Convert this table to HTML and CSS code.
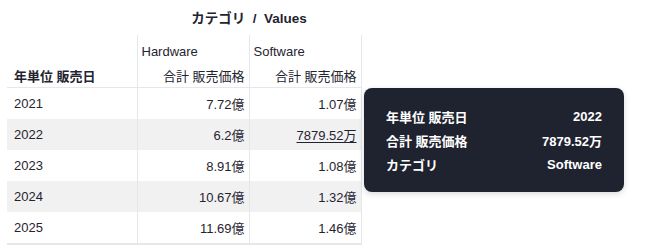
FILE: index.html
```html
<!DOCTYPE html>
<html lang="ja">
<head>
<meta charset="utf-8">
<link rel="stylesheet" href="styles.css">
</head>
<body>
<div class="pivot">
  <div class="title-row">
    <div class="title-spacer"></div>
    <div class="title">カテゴリ &nbsp;/&nbsp; Values</div>
  </div>
  <table class="grid">
    <colgroup>
      <col class="c1"><col class="c2"><col class="c3">
    </colgroup>
    <thead>
      <tr class="h1">
        <th class="corner"></th>
        <th class="cat">Hardware</th>
        <th class="cat last">Software</th>
      </tr>
      <tr class="h2">
        <th class="rowhead">年単位 販売日</th>
        <th class="measure">合計 販売価格</th>
        <th class="measure last">合計 販売価格</th>
      </tr>
    </thead>
    <tbody>
      <tr><td class="year">2021</td><td class="num">7.72億</td><td class="num last">1.07億</td></tr>
      <tr class="alt"><td class="year">2022</td><td class="num">6.2億</td><td class="num last"><span class="hover">7879.52万</span></td></tr>
      <tr><td class="year">2023</td><td class="num">8.91億</td><td class="num last">1.08億</td></tr>
      <tr class="alt"><td class="year">2024</td><td class="num">10.67億</td><td class="num last">1.32億</td></tr>
      <tr class="end"><td class="year">2025</td><td class="num">11.69億</td><td class="num last">1.46億</td></tr>
    </tbody>
  </table>
  <div class="tooltip">
    <div class="tip-row"><span>年単位 販売日</span><span>2022</span></div>
    <div class="tip-row"><span>合計 販売価格</span><span>7879.52万</span></div>
    <div class="tip-row"><span>カテゴリ</span><span>Software</span></div>
  </div>
</div>
</body>
</html>
```

FILE: styles.css
```css
html, body {
  margin: 0;
  padding: 0;
  background: #ffffff;
}
body {
  font-family: "Liberation Sans", "Noto Sans CJK JP", sans-serif;
  font-size: 13px;
  color: #1f2430;
}
.pivot {
  position: relative;
  padding-left: 7px;
  width: 640px;
  height: 252px;
}
.title-row {
  display: grid;
  grid-template-columns: 130px 224px;
  height: 35px;
  align-items: center;
}
.title {
  text-align: center;
  font-weight: bold;
  font-size: 13.5px;
  color: #1f2430;
  padding-bottom: 1px;
}
.grid {
  border-collapse: collapse;
  table-layout: fixed;
  width: 354px;
}
.c1 { width: 130px; }
.c2 { width: 112px; }
.c3 { width: 112px; }
.grid th, .grid td {
  padding: 0;
  white-space: nowrap;
}
.h1 th {
  height: 26px;
  padding-top: 3px;
  text-align: left;
  font-weight: normal;
  vertical-align: middle;
}
.h1 .cat {
  padding-left: 4px;
  border-left: 1px solid #e5e7eb;
}
.h1 .cat.last, .h2 .measure.last, .num.last {
  border-right: 1px solid #e5e7eb;
}
.h2 th {
  height: 23px;
  border-bottom: 1px solid #e5e7eb;
  vertical-align: middle;
}
.rowhead {
  text-align: left;
  font-weight: bold;
  padding-left: 7px !important;
}
.measure {
  text-align: right;
  font-weight: normal;
  padding-right: 4px !important;
  border-left: 1px solid #e5e7eb;
}
.grid td {
  height: 31px;
  vertical-align: middle;
}
.year {
  padding-left: 7px !important;
}
.num {
  text-align: right;
  padding-right: 4px !important;
  border-left: 1px solid #e5e7eb;
}
.alt td {
  background: #f1f1f2;
}
.end td {
  border-bottom: 2px solid #e5e7eb;
}
.hover {
  text-decoration: underline;
  text-underline-offset: 2px;
}
.tooltip {
  position: absolute;
  left: 364px;
  top: 88px;
  width: 260px;
  height: 104px;
  box-sizing: border-box;
  padding: 16px 22px;
  background: #1f2330;
  border-radius: 8px;
  box-shadow: 0 2px 6px rgba(0, 0, 0, 0.15);
  color: #ffffff;
  font-weight: 600;
}
.tip-row {
  display: flex;
  justify-content: space-between;
  height: 24px;
  align-items: center;
}
```
